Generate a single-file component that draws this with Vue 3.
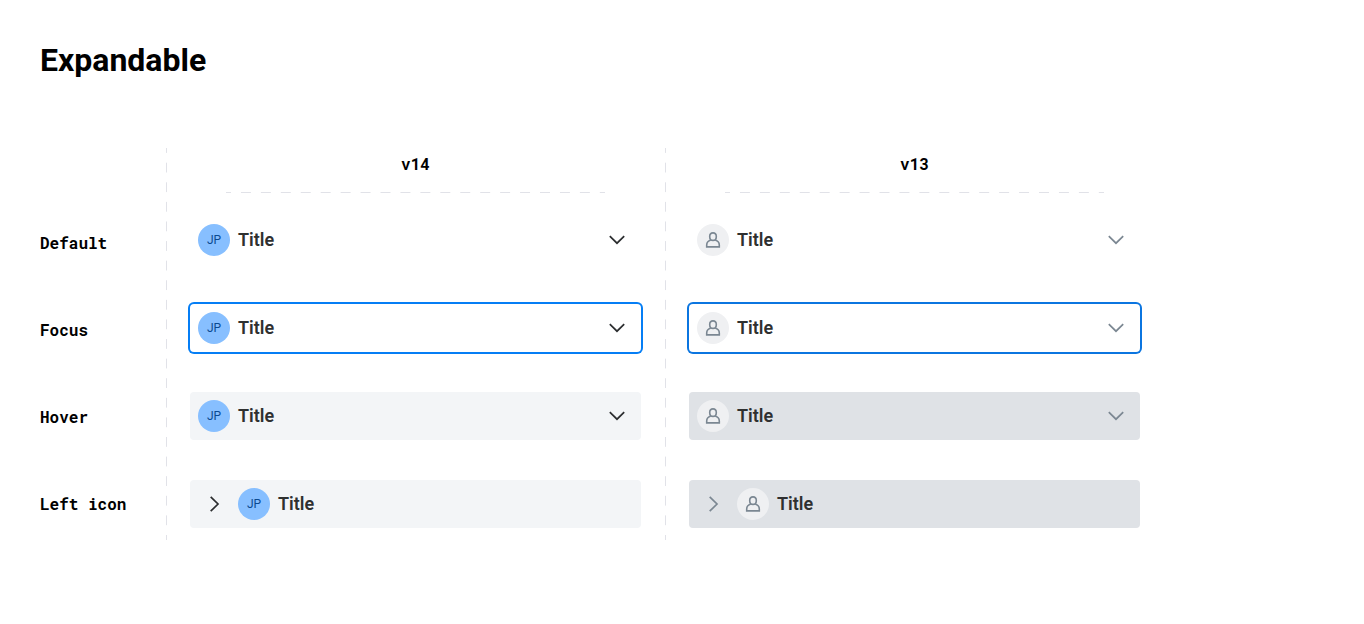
<script setup>
const labels = ['Default', 'Focus', 'Hover', 'Left icon']

const rows = [
  { id: 'default', state: '', left: false },
  { id: 'focus', state: 'focused', left: false },
  { id: 'hover', state: 'hovered', left: false },
  { id: 'left', state: 'hovered', left: true },
]

const versions = ['v14', 'v13']
</script>

<template>
  <main class="page">
    <h1 class="heading">Expandable</h1>
    <div class="board">
      <ul class="labels">
        <li v-for="label in labels" :key="label" class="label">{{ label }}</li>
      </ul>
      <section v-for="version in versions" :key="version" class="column" :class="version">
        <h2 class="version">{{ version }}</h2>
        <div class="divider"></div>
        <div class="stack">
          <button
            v-for="row in rows"
            :key="row.id"
            type="button"
            class="expandable"
            :class="row.state"
            aria-expanded="false"
          >
            <svg v-if="row.left" class="chevron leading" viewBox="0 0 24 24" aria-hidden="true">
              <path d="M8.7 4.8 L16 12 L8.7 19.2" />
            </svg>
            <span class="avatar">
              <template v-if="version === 'v14'">JP</template>
              <svg v-else class="person" viewBox="0 0 16 16" aria-hidden="true">
                <path d="M8 .9 C5.8 .9 4.7 2.4 4.7 4.4 C4.7 6.6 6 8.4 8 8.4 C10 8.4 11.3 6.6 11.3 4.4 C11.3 2.4 10.2 .9 8 .9 Z" />
                <path d="M5.8 8.1 C3.2 8.9 1.7 10.4 1.7 13 V14.9 H14.3 V13 C14.3 10.4 12.8 8.9 10.2 8.1" />
              </svg>
            </span>
            <span class="title">Title</span>
            <svg v-if="!row.left" class="chevron trailing" viewBox="0 0 24 24" aria-hidden="true">
              <path d="M4.8 8.2 L12 15.2 L19.2 8.2" />
            </svg>
          </button>
        </div>
      </section>
    </div>
  </main>
</template>

<style>
body {
  background: #fff;
}
</style>

<style scoped>
.page {
  box-sizing: border-box;
  padding: 40px;
  color: #000;
  font-family: Roboto, "Liberation Sans", sans-serif;
}

.heading {
  margin: 0;
  font-size: 32px;
  line-height: 40px;
  font-weight: 700;
}

.board {
  display: grid;
  grid-template-columns: 126px minmax(0, 1fr) minmax(0, 1fr);
  max-width: 1124px;
  margin-top: 68px;
}

.labels {
  display: flex;
  flex-direction: column;
  gap: 63px;
  margin: 0;
  padding: 83px 0 0;
  list-style: none;
}

.label,
.version {
  font-family: "Roboto Mono", "DejaVu Sans Mono", monospace;
  font-size: 16px;
  line-height: 24px;
  font-weight: 700;
}

.column {
  padding: 4px 24px 12px;
  background-image: linear-gradient(#e1e2e8 25%, transparent 25% 75%, #e1e2e8 75%);
  background-size: 1px 20px;
  background-repeat: no-repeat round;
}

.version {
  margin: 0;
  text-align: center;
}

.divider {
  height: 1px;
  margin: 16px 36px 0;
  background-image: linear-gradient(90deg, #e1e2e8 25%, transparent 25% 75%, #e1e2e8 75%);
  background-size: 20px 1px;
  background-repeat: round no-repeat;
}

.stack {
  display: flex;
  flex-direction: column;
  gap: 40px;
  margin-top: 23px;
}

.expandable {
  display: flex;
  align-items: center;
  gap: 8px;
  width: 100%;
  padding: 8px 12px 8px 8px;
  border: 0;
  border-radius: 4px;
  background: #fff;
  color: #2b2d2f;
  font-family: inherit;
  text-align: left;
  cursor: pointer;
}

.focused {
  box-shadow: 0 0 0 2px #057ef5;
}

.v13 .focused {
  box-shadow: 0 0 0 2px #0b75e0;
}

.hovered {
  background: #f3f5f7;
}

.v13 .hovered {
  background: #dfe2e6;
}

.avatar {
  display: flex;
  align-items: center;
  justify-content: center;
  width: 32px;
  height: 32px;
  border-radius: 50%;
  background: #87bfff;
  color: #0b4a91;
  font-size: 12px;
  line-height: 16px;
}

.v13 .avatar {
  background: #eff0f2;
  color: #7b8792;
}

.person {
  width: 16px;
  height: 16px;
  fill: none;
  stroke: currentColor;
  stroke-width: 1.6;
}

.title {
  flex: 1;
  color: #2f3030;
  font-size: 18px;
  line-height: 24px;
  font-weight: 600;
}

.chevron {
  width: 24px;
  height: 24px;
  fill: none;
  stroke: currentColor;
  stroke-width: 1.7;
}

.leading {
  margin: 0 4px;
}

.v13 .chevron {
  color: #7b8792;
}
</style>
